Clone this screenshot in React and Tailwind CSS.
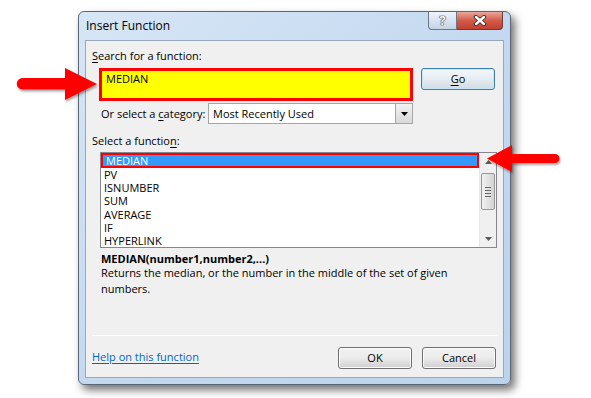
import React from "react";

function Btn({ children, className = "" }) {
  return (
    <div
      className={
        "h-[22px] w-[74px] rounded-[3px] border border-[#707070] bg-gradient-to-b from-[#f2f2f2] via-[#ebebeb] via-50% to-[#cfcfcf] flex items-center justify-center text-[11px] text-black shadow-[inset_0_0_0_1px_#fcfcfc] " +
        className
      }
    >
      {children}
    </div>
  );
}

export default function App() {
  const items = ["PV", "ISNUMBER", "SUM", "AVERAGE", "IF", "HYPERLINK"];
  return (
    <div className="relative w-[591px] h-[398px] bg-white overflow-hidden pt-[11px] pl-[78px] font-['Open_Sans','Noto_Sans',sans-serif] text-black">
      {/* window */}
      <div className="w-[433px] h-[374px] rounded-[6px] border border-[#5b6777] bg-gradient-to-br from-[#d7e6f6] via-[#c4d9f0] to-[#bcd3ec] shadow-[4px_5px_9px_rgba(0,0,0,0.55)] flex flex-col px-[6px] pb-[6px]">
        {/* title bar */}
        <div className="h-[28px] flex items-start relative">
          <div className="pl-[1px] pt-[6px] text-[12px] leading-[16px] text-black">Insert Function</div>
          <div className="ml-auto mr-[1px] flex">
            <div className="w-[29px] h-[18px] border border-[#6a7788] border-t-0 rounded-bl-[4px] bg-gradient-to-b from-[#eef3fa] via-[#d9e4f1] to-[#c3d2e4] flex items-center justify-center">
              <span className="text-[13px] leading-none font-bold text-[#f8f8f8] [text-shadow:0_0_1px_#333,0_0_1px_#333,0_0_1px_#333]">?</span>
            </div>
            <div className="w-[46px] h-[18px] border border-[#6f3c35] border-t-0 border-l-0 rounded-br-[4px] bg-gradient-to-b from-[#e8a89c] via-[#d25b49] to-[#c1402f] flex items-center justify-center">
              <svg width="14" height="11" viewBox="0 0 14 11">
                <path d="M3 2 L11 9 M11 2 L3 9" stroke="#3b2a2a" strokeWidth="4.2" strokeLinecap="round" />
                <path d="M3 2 L11 9 M11 2 L3 9" stroke="#ffffff" strokeWidth="2.4" strokeLinecap="round" />
              </svg>
            </div>
          </div>
        </div>
        {/* inner panel */}
        <div className="w-[419px] h-[338px] border border-[#97a8bd] bg-[#f0f0f0] flex flex-col text-[11px]">
          <div className="mt-[7px] ml-[6px] leading-[15px]">
            <span className="underline underline-offset-2">S</span>earch for a function:
          </div>
          <div className="mt-[5px] flex items-start">
            <div className="ml-[13px] w-[314px] h-[33px] border-[3px] border-[#ff0000] bg-[#ffff00] pl-[4px] pt-0 leading-[15px]">
              MEDIAN
            </div>
            <div className="ml-[8px] h-[22px] w-[74px] rounded-[3px] border border-[#3c7fb1] bg-gradient-to-b from-[#f2f7fa] via-[#e6edf2] via-50% to-[#d2dbe2] flex items-center justify-center shadow-[inset_0_0_0_1px_#c8e6f8]">
              <span className="underline underline-offset-2">G</span>o
            </div>
          </div>
          <div className="mt-[2px] flex items-center h-[21px]">
            <div className="ml-[15px] w-[107px] leading-[15px]">
              Or select a <span className="underline underline-offset-2">c</span>ategory:
            </div>
            <div className="w-[205px] h-[21px] border border-[#a6a6a6] bg-white flex items-center">
              <div className="pl-[4px] flex-1 leading-[15px]">Most Recently Used</div>
              <div className="w-[17px] h-[19px] border-l border-[#a6a6a6] bg-gradient-to-b from-[#f3f3f3] to-[#d9d9d9] flex items-center justify-center">
                <svg width="7" height="4" viewBox="0 0 7 4"><path d="M0 0 H7 L3.5 4 Z" fill="#000" /></svg>
              </div>
            </div>
          </div>
          <div className="mt-[9px] ml-[6px] leading-[15px]">
            Select a functio<span className="underline underline-offset-2">n</span>:
          </div>
          {/* listbox */}
          <div className="mt-[4px] ml-[14px] w-[397px] h-[96px] border border-[#828790] bg-white flex">
            <div className="flex-1 flex flex-col">
              <div className="h-[16px] border-[2.5px] border-[#ff0000] bg-[#3399ff] text-white pl-[3px] leading-[11px]">MEDIAN</div>
              {items.map((t) => (
                <div key={t} className="h-[13.2px] leading-[13.2px] pl-[3px]">{t}</div>
              ))}
            </div>
            <div className="w-[17px] h-full bg-[#f0f0f0] border-l border-[#e6e6e6] flex flex-col items-center">
              <div className="h-[17px] flex items-center justify-center">
                <svg width="7" height="4" viewBox="0 0 7 4"><path d="M0 4 H7 L3.5 0 Z" fill="#5a5a5a" /></svg>
              </div>
              <div className="mt-[3px] w-[14px] h-[37px] rounded-[2px] border border-[#979797] bg-gradient-to-r from-[#f2f2f2] via-[#e3e3e3] to-[#d2d2d2] flex flex-col items-center justify-center gap-[2px]">
                <div className="w-[6px] h-[1px] bg-[#666]" />
                <div className="w-[6px] h-[1px] bg-[#666]" />
                <div className="w-[6px] h-[1px] bg-[#666]" />
                <div className="w-[6px] h-[1px] bg-[#666]" />
              </div>
              <div className="mt-auto h-[17px] flex items-center justify-center">
                <svg width="7" height="4" viewBox="0 0 7 4"><path d="M0 0 H7 L3.5 4 Z" fill="#5a5a5a" /></svg>
              </div>
            </div>
          </div>
          <div className="mt-[3px] ml-[15px] font-bold leading-[15px]">MEDIAN(number1,number2,...)</div>
          <div className="ml-[15px] w-[380px] leading-[15.5px] mt-[-1px]">
            Returns the median, or the number in the middle of the set of given numbers.
          </div>
          <div className="flex-1" />
          <div className="mx-[6px] h-px bg-[#dfdfdf] border-b border-white" />
          <div className="mt-[11px] mb-[8px] flex items-center">
            <div className="ml-[6px] text-[#0066cc] underline underline-offset-2 leading-[15px] -mt-[3px]">Help on this function</div>
            <Btn className="ml-auto">OK</Btn>
            <Btn className="ml-[10px] mr-[7px]">Cancel</Btn>
          </div>
        </div>
      </div>

      {/* annotation arrows */}
      <svg className="absolute left-0 top-0 pointer-events-none" width="591" height="398" viewBox="0 0 591 398">
        <defs>
          <filter id="sh" x="-10%" y="-20%" width="130%" height="150%">
            <feDropShadow dx="1" dy="2" stdDeviation="1.2" floodColor="#000" floodOpacity="0.35" />
          </filter>
        </defs>
        <g filter="url(#sh)" fill="#ff0000">
          <path d="M22.5 78 H65 V68 L97 84 L65 100 V89.5 H22.5 A5.75 5.75 0 0 1 22.5 78 Z" />
          <path d="M555 154 H512 V145 L487 158.5 L512 172 V163 H555 A4.5 4.5 0 0 0 555 154 Z" />
        </g>
      </svg>
    </div>
  );
}
